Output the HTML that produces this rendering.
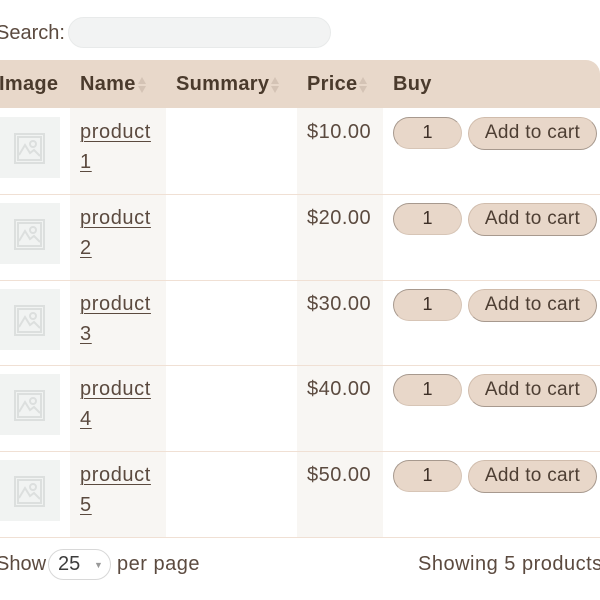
<!DOCTYPE html>
<html><head><style>
*{margin:0;padding:0;box-sizing:border-box}
body{width:600px;height:600px;overflow:hidden;background:#fff;font-family:"Liberation Sans",sans-serif;color:#5b4a3f;position:relative}
.a{position:absolute}
.t{font-size:20px;letter-spacing:0.5px;white-space:nowrap}
.h{font-size:20px;font-weight:bold;color:#4a3a2c;top:73px;letter-spacing:0.3px;white-space:nowrap}
.arr{display:inline-block;vertical-align:middle;margin-left:1px}
.col{background:#f8f6f3}
.line{height:1px;background:#f0e0d4;left:0;width:600px}
.thumb{left:0;width:60px;height:61px;background:#f1f3f2}
.thumb svg{position:absolute;left:14px;top:16px}
.link{left:80px;text-decoration:underline;text-decoration-thickness:1px;text-underline-offset:3px;line-height:30px;font-size:20px;letter-spacing:0.6px;color:#5b4a3f}
.qty{left:393px;width:69px;height:32px;background:#e8d7c9;border:1.5px solid #a7998e;border-right-color:#d7c5b6;border-bottom-color:#d7c5b6;border-radius:16px;text-align:center;line-height:29px;font-size:18px;color:#3d2f26}
.btn{left:468px;width:129px;height:33px;background:#e8d7c9;border:1.5px solid #d0bcac;border-bottom-color:#a7998e;border-right-color:#a7998e;border-radius:17px;text-align:center;line-height:30px;font-size:19px;letter-spacing:0.3px;color:#4d3e33;white-space:nowrap}
</style></head><body>
<div class="a t" style="left:-4px;top:22px;letter-spacing:0">Search:</div>
<div class="a" style="left:68px;top:17px;width:263px;height:31px;background:#f2f3f3;border:1px solid #e8eaea;border-radius:16px"></div>

<div class="a" style="left:0;top:60px;width:600px;height:48px;background:#e8d8ca;border-top-right-radius:14px"></div>
<div class="a col" style="left:70px;top:108px;width:96px;height:429px"></div>
<div class="a col" style="left:297px;top:108px;width:86px;height:429px"></div>
<div class="a h" style="left:-1px">Image</div>
<div class="a h" style="left:80px">Name<svg class="arr" width="10" height="18" viewBox="0 0 10 18"><path d="M5 1 L9 8 H1Z M5 17 L9 10 H1Z" fill="#d4c3b5"/></svg></div>
<div class="a h" style="left:176px">Summary<svg class="arr" width="10" height="18" viewBox="0 0 10 18"><path d="M5 1 L9 8 H1Z M5 17 L9 10 H1Z" fill="#d4c3b5"/></svg></div>
<div class="a h" style="left:307px">Price<svg class="arr" width="10" height="18" viewBox="0 0 10 18"><path d="M5 1 L9 8 H1Z M5 17 L9 10 H1Z" fill="#d4c3b5"/></svg></div>
<div class="a h" style="left:393px">Buy</div>

<div class="a line" style="top:194px"></div>
<div class="a line" style="top:280px"></div>
<div class="a line" style="top:365px"></div>
<div class="a line" style="top:451px"></div>
<div class="a line" style="top:537px"></div>

<div class="a thumb" style="top:117px"><svg width="31" height="31" viewBox="0 0 31 31" fill="none" stroke="#dcdfde" stroke-width="2"><rect x="1" y="1" width="29" height="29"/><rect x="4" y="4" width="23" height="23"/><circle cx="19" cy="11" r="3"/><path d="M5 22 L11 12 L16 20 L20 17 L26 23"/></svg></div>
<a class="a link" style="top:117px">product<br>1</a>
<div class="a t" style="left:307px;top:121px">$10.00</div>
<div class="a qty" style="top:117px">1</div><div class="a btn" style="top:117px">Add to cart</div>

<div class="a thumb" style="top:203px"><svg width="31" height="31" viewBox="0 0 31 31" fill="none" stroke="#dcdfde" stroke-width="2"><rect x="1" y="1" width="29" height="29"/><rect x="4" y="4" width="23" height="23"/><circle cx="19" cy="11" r="3"/><path d="M5 22 L11 12 L16 20 L20 17 L26 23"/></svg></div>
<a class="a link" style="top:203px">product<br>2</a>
<div class="a t" style="left:307px;top:207px">$20.00</div>
<div class="a qty" style="top:203px">1</div><div class="a btn" style="top:203px">Add to cart</div>

<div class="a thumb" style="top:289px"><svg width="31" height="31" viewBox="0 0 31 31" fill="none" stroke="#dcdfde" stroke-width="2"><rect x="1" y="1" width="29" height="29"/><rect x="4" y="4" width="23" height="23"/><circle cx="19" cy="11" r="3"/><path d="M5 22 L11 12 L16 20 L20 17 L26 23"/></svg></div>
<a class="a link" style="top:289px">product<br>3</a>
<div class="a t" style="left:307px;top:293px">$30.00</div>
<div class="a qty" style="top:289px">1</div><div class="a btn" style="top:289px">Add to cart</div>

<div class="a thumb" style="top:374px"><svg width="31" height="31" viewBox="0 0 31 31" fill="none" stroke="#dcdfde" stroke-width="2"><rect x="1" y="1" width="29" height="29"/><rect x="4" y="4" width="23" height="23"/><circle cx="19" cy="11" r="3"/><path d="M5 22 L11 12 L16 20 L20 17 L26 23"/></svg></div>
<a class="a link" style="top:374px">product<br>4</a>
<div class="a t" style="left:307px;top:378px">$40.00</div>
<div class="a qty" style="top:374px">1</div><div class="a btn" style="top:374px">Add to cart</div>

<div class="a thumb" style="top:460px"><svg width="31" height="31" viewBox="0 0 31 31" fill="none" stroke="#dcdfde" stroke-width="2"><rect x="1" y="1" width="29" height="29"/><rect x="4" y="4" width="23" height="23"/><circle cx="19" cy="11" r="3"/><path d="M5 22 L11 12 L16 20 L20 17 L26 23"/></svg></div>
<a class="a link" style="top:460px">product<br>5</a>
<div class="a t" style="left:307px;top:464px">$50.00</div>
<div class="a qty" style="top:460px">1</div><div class="a btn" style="top:460px">Add to cart</div>

<div class="a t" style="left:-4px;top:553px;letter-spacing:0">Show</div>
<div class="a" style="left:48px;top:549px;width:63px;height:31px;border:1px solid #d8d8d8;border-radius:16px;font-size:20px;line-height:29px;padding-left:9px;color:#3d3d3d">25<span style="font-size:9px;color:#999;position:absolute;left:45px;top:1px">▼</span></div>
<div class="a t" style="left:117px;top:553px">per page</div>
<div class="a t" style="left:418px;top:553px">Showing 5 products</div>
</body></html>
